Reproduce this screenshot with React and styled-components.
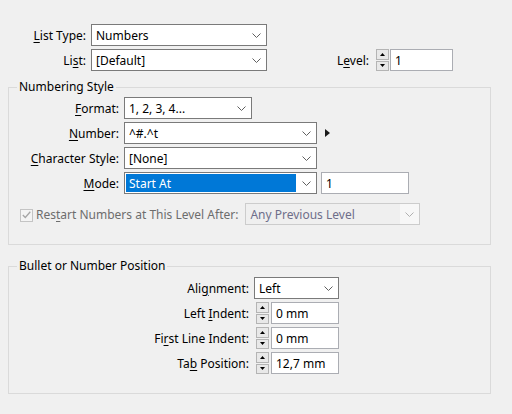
import styled, { createGlobalStyle } from 'styled-components'

const GlobalStyle = createGlobalStyle`
  body {
    margin: 0;
    background: #f0f0f0;
  }
`

const Dialog = styled.div`
  width: 512px;
  height: 414px;
  box-sizing: border-box;
  padding: 24px 0 0 8px;
  background: #f0f0f0;
  font-family: "Noto Sans", "Open Sans", sans-serif;
  font-size: 12px;
  color: #000;
`

const Row = styled.div`
  display: flex;
  align-items: center;
  height: 22px;
  margin-top: ${(p) => p.$gap || 0}px;
`

const Label = styled.label`
  width: ${(p) => p.$width}px;
  text-align: right;
  padding-right: 5px;
  box-sizing: border-box;
  flex: none;
  white-space: nowrap;
  u {
    text-decoration: underline;
    text-underline-offset: 2px;
  }
`

const SelectBox = styled.div`
  width: ${(p) => p.$width}px;
  height: 22px;
  box-sizing: border-box;
  flex: none;
  display: flex;
  align-items: center;
  border: 1px solid ${(p) => (p.$disabled ? '#cccccc' : '#7a7a7a')};
  background: ${(p) => (p.$disabled ? '#efefef' : '#fff')};
  color: ${(p) => (p.$disabled ? '#6e6e8a' : '#000')};
`

const SelectValue = styled.span`
  flex: 1;
  align-self: stretch;
  display: flex;
  align-items: center;
  margin: 1px;
  padding-left: 3px;
  background: ${(p) => (p.$selected ? '#0078d7' : 'transparent')};
  color: ${(p) => (p.$selected ? '#fff' : 'inherit')};
  white-space: nowrap;
  overflow: hidden;
`

const ChevronSlot = styled.span`
  width: 19px;
  align-self: stretch;
  display: flex;
  align-items: center;
  justify-content: center;
  background: ${(p) => (p.$disabled ? '#f7f7f7' : 'transparent')};
`

const TextInput = styled.div`
  width: ${(p) => p.$width}px;
  height: 22px;
  box-sizing: border-box;
  flex: none;
  display: flex;
  align-items: center;
  padding-left: 4px;
  border: 1px solid #abadb3;
  background: #fff;
  margin-left: ${(p) => p.$offset || 0}px;
`

const Spinner = styled.div`
  width: 13px;
  height: 22px;
  flex: none;
  display: flex;
  flex-direction: column;
  gap: 1px;
  margin-left: ${(p) => p.$offset || 0}px;
  margin-right: ${(p) => p.$space || 1}px;
`

const SpinButton = styled.span`
  flex: 1;
  display: flex;
  align-items: center;
  justify-content: center;
  border: 1px solid #b4b4b4;
  background: #e8e8e8;
`

const Group = styled.fieldset`
  width: 483px;
  box-sizing: border-box;
  margin: ${(p) => p.$top}px 0 0 0;
  padding: 2px 0 ${(p) => p.$bottom}px 0;
  border: 1px solid #dadada;
  min-width: 0;
`

const Legend = styled.legend`
  margin-left: 8px;
  padding: 0 2px;
  line-height: 16px;
`

const LevelLabel = styled(Label)`
  width: auto;
  margin-left: 70px;
  padding-right: 7px;
`

const MoreArrow = styled.span`
  width: 0;
  height: 0;
  margin-left: 8px;
  border-top: 4px solid transparent;
  border-bottom: 4px solid transparent;
  border-left: 5px solid #1a1a1a;
`

const CheckRow = styled.div`
  display: flex;
  align-items: center;
  height: 22px;
  margin-top: 9px;
  padding-left: 11px;
  color: #6d6d6d;
  u {
    text-decoration: underline;
    text-underline-offset: 2px;
  }
`

const CheckBox = styled.span`
  width: 13px;
  height: 13px;
  box-sizing: border-box;
  flex: none;
  display: flex;
  align-items: center;
  justify-content: center;
  border: 1px solid #c4c4c4;
  background: #f4f4f4;
  margin-right: 3px;
  margin-top: 2px;
`

const CheckText = styled.span`
  margin-right: 7px;
  white-space: nowrap;
`

function Chevron({ disabled }) {
  return (
    <ChevronSlot $disabled={disabled}>
      <svg width="9" height="5" viewBox="0 0 9 5">
        <polyline points="0.5,0.5 4.5,4.5 8.5,0.5" fill="none" stroke={disabled ? '#b0b0b0' : '#606060'} strokeWidth="1" />
      </svg>
    </ChevronSlot>
  )
}

function Select({ width, value, selected, disabled }) {
  return (
    <SelectBox $width={width} $disabled={disabled}>
      <SelectValue $selected={selected}>{value}</SelectValue>
      <Chevron disabled={disabled} />
    </SelectBox>
  )
}

function SpinField({ value, width, offset, space }) {
  return (
    <>
      <Spinner $offset={offset} $space={space}>
        <SpinButton>
          <svg width="5" height="3" viewBox="0 0 5 3"><polygon points="0,3 2.5,0 5,3" fill="#000" /></svg>
        </SpinButton>
        <SpinButton>
          <svg width="5" height="3" viewBox="0 0 5 3"><polygon points="0,0 2.5,3 5,0" fill="#000" /></svg>
        </SpinButton>
      </Spinner>
      <TextInput $width={width}>{value}</TextInput>
    </>
  )
}

export default function App() {
  return (
    <>
      <GlobalStyle />
      <Dialog>
        <Row>
          <Label $width={83}><u>L</u>ist Type:</Label>
          <Select width={176} value="Numbers" />
        </Row>
        <Row $gap={3}>
          <Label $width={83}>Li<u>s</u>t:</Label>
          <Select width={176} value="[Default]" />
          <LevelLabel>L<u>e</u>vel:</LevelLabel>
          <SpinField value="1" width={63} />
        </Row>

        <Group $top={8} $bottom={19}>
          <Legend>Numbering Style</Legend>
          <Row>
            <Label $width={115}><u>F</u>ormat:</Label>
            <Select width={128} value="1, 2, 3, 4..." />
          </Row>
          <Row $gap={3}>
            <Label $width={115}><u>N</u>umber:</Label>
            <Select width={193} value="^#.^t" />
            <MoreArrow />
          </Row>
          <Row $gap={3}>
            <Label $width={115}><u>C</u>haracter Style:</Label>
            <Select width={193} value="[None]" />
          </Row>
          <Row $gap={3}>
            <Label $width={115}><u>M</u>ode:</Label>
            <Select width={193} value="Start At" selected />
            <TextInput $width={88} $offset={4}>1</TextInput>
          </Row>
          <CheckRow>
            <CheckBox>
              <svg width="9" height="8" viewBox="0 0 9 8">
                <polyline points="0.8,4 3.3,6.5 8.3,0.8" fill="none" stroke="#a6a6a6" strokeWidth="1.3" />
              </svg>
            </CheckBox>
            <CheckText>Res<u>t</u>art Numbers at This Level After:</CheckText>
            <Select width={175} value="Any Previous Level" disabled />
          </CheckRow>
        </Group>

        <Group $top={13} $bottom={19}>
          <Legend>Bullet or Number Position</Legend>
          <Row $gap={1}>
            <Label $width={245}>Ali<u>g</u>nment:</Label>
            <Select width={85} value="Left" />
          </Row>
          <Row $gap={3}>
            <Label $width={245}>Left <u>I</u>ndent:</Label>
            <SpinField value="0 mm" width={68} offset={2} space={2} />
          </Row>
          <Row $gap={3}>
            <Label $width={245}>Fi<u>r</u>st Line Indent:</Label>
            <SpinField value="0 mm" width={68} offset={2} space={2} />
          </Row>
          <Row $gap={3}>
            <Label $width={245}>Ta<u>b</u> Position:</Label>
            <SpinField value="12,7 mm" width={68} offset={2} space={2} />
          </Row>
        </Group>
      </Dialog>
    </>
  )
}
